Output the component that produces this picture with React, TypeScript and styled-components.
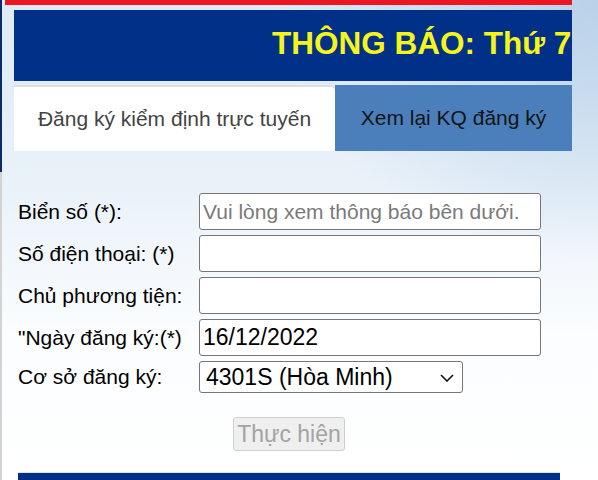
import React from 'react';
import styled, { createGlobalStyle } from 'styled-components';

const GlobalStyle = createGlobalStyle`
  html, body {
    margin: 0;
    padding: 0;
  }
  body {
    font-family: "Liberation Sans", Arial, sans-serif;
    background: #ffffff;
  }
  * {
    box-sizing: border-box;
  }
`;

const Page = styled.div`
  width: 598px;
  height: 480px;
  overflow: hidden;
  background:
    radial-gradient(ellipse 320px 260px at 100% 0%, #b9d1e9 0%, rgba(200, 219, 238, 0) 100%),
    linear-gradient(180deg, #dfeaf5 0%, #eaf2f9 40%, #fbfdfe 70%, #ffffff 100%);
`;

const Top = styled.div`
  height: 172px;
  border-left: 2px solid #0b2c6c;
  padding-left: 3px;
`;

const RedBar = styled.div`
  width: 567px;
  height: 5px;
  background: #ec1622;
`;

const Banner = styled.div`
  margin: 5px 0 0 9px;
  width: 558px;
  height: 71px;
  background: #013088;
  overflow: hidden;
  display: flex;
  align-items: center;
  padding: 0 0 4px 258px;
`;

const BannerText = styled.span`
  white-space: nowrap;
  color: #f6f51a;
  font-weight: bold;
  font-size: 31.5px;
`;

const Tabs = styled.div`
  margin: 4px 0 0 9px;
  width: 558px;
  height: 66px;
  display: flex;
`;

const Tab = styled.div<{ active?: boolean }>`
  width: ${(p) => (p.active ? '321px' : '237px')};
  display: flex;
  align-items: center;
  justify-content: center;
  font-size: 21px;
  color: ${(p) => (p.active ? '#434343' : '#141414')};
  background: ${(p) => (p.active ? '#ffffff' : '#4a7fbb')};
  border-top: ${(p) => (p.active ? '2px solid #dedede' : 'none')};
  border-top-right-radius: ${(p) => (p.active ? '5px' : '0')};
`;

const FormArea = styled.div`
  height: 308px;
  border-left: 2px solid #d3d3d3;
  padding: 21px 0 0 16px;
  display: flex;
  flex-direction: column;
`;

const Form = styled.div`
  display: grid;
  grid-template-columns: 181px 342px;
  row-gap: 5px;
  align-items: center;
`;

const Label = styled.label`
  font-size: 21px;
  color: #000;
  white-space: nowrap;
`;

const TextInput = styled.input<{ big?: boolean }>`
  width: 342px;
  height: 37px;
  margin: 0;
  border: 1px solid #767676;
  border-radius: 3px;
  background: #fff;
  padding: 0 0 0 3px;
  font-family: inherit;
  font-size: ${(p) => (p.big ? '23px' : '21px')};
  color: #000;
  outline: none;
  &::placeholder {
    color: #7a7a7a;
  }
`;

const SelectWrap = styled.div`
  position: relative;
  width: 264px;
  height: 32px;
`;

const Select = styled.select`
  appearance: none;
  width: 264px;
  height: 32px;
  margin: 0;
  border: 1px solid #767676;
  border-radius: 3px;
  background: #fff;
  padding: 0 0 0 6px;
  font-family: inherit;
  font-size: 23px;
  color: #000;
  outline: none;
`;

const Chevron = styled.svg`
  position: absolute;
  right: 9px;
  top: 13px;
  pointer-events: none;
`;

const ButtonCell = styled.div`
  grid-column: 2;
  padding: 19px 0 0 34px;
`;

const SubmitButton = styled.button`
  width: 112px;
  height: 34px;
  margin: 0;
  padding: 0;
  border: 1px solid #cfcfcf;
  border-radius: 3px;
  background: #efefef;
  color: #a3a3a3;
  font-family: inherit;
  font-size: 23px;
`;

const BottomBar = styled.div`
  margin-top: auto;
  width: 542px;
  height: 8px;
  background: #013088;
  border-top: 1px solid #d8e6f4;
`;

const fields = [
  { label: 'Biển số (*):', placeholder: 'Vui lòng xem thông báo bên dưới.' },
  { label: 'Số điện thoại: (*)' },
  { label: 'Chủ phương tiện:' },
];

export default function App() {
  return (
    <Page>
      <GlobalStyle />
      <Top>
        <RedBar />
        <Banner>
          <BannerText>THÔNG BÁO: Thứ 7</BannerText>
        </Banner>
        <Tabs>
          <Tab active>Đăng ký kiểm định trực tuyến</Tab>
          <Tab>Xem lại KQ đăng ký</Tab>
        </Tabs>
      </Top>
      <FormArea>
        <Form>
          {fields.map((f) => (
            <React.Fragment key={f.label}>
              <Label>{f.label}</Label>
              <TextInput placeholder={f.placeholder} />
            </React.Fragment>
          ))}
          <Label>"Ngày đăng ký:(*)</Label>
          <TextInput big defaultValue="16/12/2022" />
          <Label>Cơ sở đăng ký:</Label>
          <SelectWrap>
            <Select defaultValue="4301S">
              <option value="4301S">4301S (Hòa Minh)</option>
            </Select>
            <Chevron width="14" height="8" viewBox="0 0 14 8">
              <polyline points="1,1 7,7 13,1" fill="none" stroke="#111" strokeWidth="1.6" />
            </Chevron>
          </SelectWrap>
          <ButtonCell>
            <SubmitButton disabled>Thực hiện</SubmitButton>
          </ButtonCell>
        </Form>
        <BottomBar />
      </FormArea>
    </Page>
  );
}
